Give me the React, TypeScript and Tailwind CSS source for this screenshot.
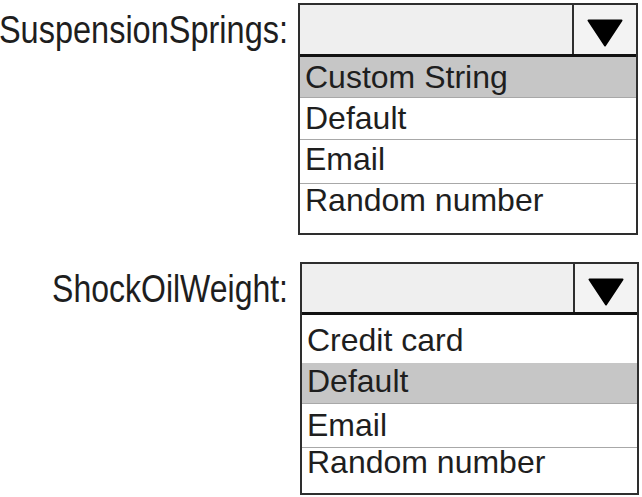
import React from "react";

type Row = { label: string; hl?: boolean; h: number; pt: number; lead?: string; divider?: boolean };

function Arrow() {
  return (
    <svg width="36" height="28" viewBox="0 0 36 28">
      <polygon points="1.5,1.5 34.5,1.5 18,26.5" fill="#000" stroke="#000" strokeWidth="2" strokeLinejoin="round" />
    </svg>
  );
}

function Select({ rows, width, header }: { rows: Row[]; width: string; header: string }) {
  return (
    <div className={`${width} border-2 border-[#2e2e2e] bg-white`}>
      <div className={`flex ${header} border-b-[3px] border-[#111]`}>
        <div className="flex-1 bg-[#efefef]" />
        <div className="w-[64px] border-l-2 border-[#2e2e2e] bg-[#f3f3f3] flex justify-center pt-[14px]">
          <Arrow />
        </div>
      </div>
      {rows.map((r, i) => (
        <div
          key={i}
          className={`${r.divider ? "border-t border-[#a8a8a8]" : ""} ${r.hl ? "bg-[#c6c6c6]" : "bg-white"} pl-[5px] text-[32px] text-[#1e1e1e]`}
          style={{ height: r.h, paddingTop: r.pt, lineHeight: r.lead ?? "32px" }}
        >
          {r.label}
        </div>
      ))}
    </div>
  );
}

export default function App() {
  return (
    <div className="w-[642px] h-[497px] bg-white overflow-hidden font-['Liberation_Sans',Arial,sans-serif]">
      <div className="flex items-start pt-[3px]">
        <div className="w-[298px] h-[54px] pr-[10px] flex items-center justify-end">
          <span className="text-[32.5px] leading-[32px] text-[#1e1e1e] scale-y-[1.22] inline-block whitespace-nowrap">SuspensionSprings:</span>
        </div>
        <Select
          width="w-[340px]"
          header="h-[52px]"
          rows={[
            { label: "Custom String", hl: true, h: 40, pt: 4 },
            { label: "Default", h: 42, pt: 4, divider: true },
            { label: "Email", h: 44, pt: 3, divider: true },
            { label: "Random number", h: 50, pt: 0, divider: true },
          ]}
        />
      </div>
      <div className="flex items-start mt-[27px]">
        <div className="w-[300px] h-[53px] pr-[12px] flex items-center justify-end">
          <span className="text-[32px] leading-[32px] text-[#1e1e1e] scale-y-[1.22] inline-block whitespace-nowrap">ShockOilWeight:</span>
        </div>
        <Select
          width="w-[339px]"
          header="h-[51px]"
          rows={[
            { label: "Credit card", h: 48, pt: 9 },
            { label: "Default", hl: true, h: 40, pt: 2 },
            { label: "Email", h: 44, pt: 5, divider: true },
            { label: "Random number", h: 46, pt: 0, lead: "28px", divider: true },
          ]}
        />
      </div>
    </div>
  );
}
